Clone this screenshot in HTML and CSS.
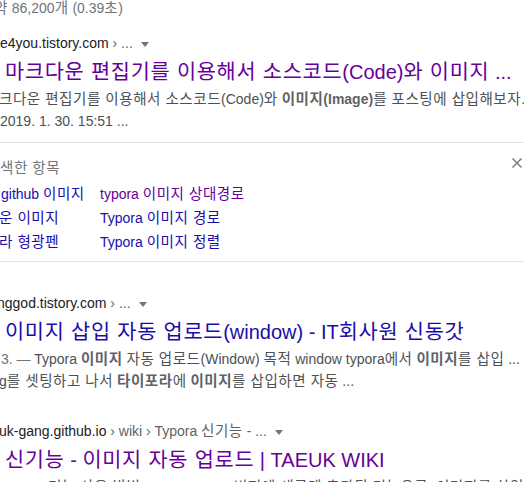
FILE: index.html
```html
<!DOCTYPE html>
<html lang="ko">
<head>
<meta charset="utf-8">
<title>Typora 이미지 - 검색결과</title>
<link rel="stylesheet" href="styles.css">
</head>
<body>
<div class="page">
  <div class="stats"><span class="k">약</span> 86,200<span class="k">개</span> (0.39<span class="k">초</span>)</div>

  <div class="result first">
    <div class="url"><span class="domain">e4you.tistory.com</span><span class="crumb"> › ...</span><span class="arrow"></span></div>
    <div class="title visited"><span class="k">마크다운 편집기를 이용해서 소스코드</span>(Code)<span class="k">와 이미지</span> ...</div>
    <div class="snippet">
      <div class="line s1a"><span class="k">크다운 편집기를 이용해서 소스코드</span>(Code)<span class="k">와</span> <b><span class="k">이미지</span>(Image)</b><span class="k">를 포스팅에 삽입해보자</span>.</div>
      <div class="line">2019. 1. 30. 15:51 ...</div>
    </div>
  </div>

  <div class="related">
    <div class="rel-head">
      <span class="rel-title k">색한 항목</span>
      <svg class="close" width="12" height="12" viewBox="0 0 12 12"><path d="M1.5 1.5 L10.5 10.5 M10.5 1.5 L1.5 10.5" stroke="#70757a" stroke-width="1.4" fill="none"/></svg>
    </div>
    <div class="rel-grid">
      <a class="rel-link c1a">github <span class="k">이미지</span></a>
      <a class="rel-link visited">typora <span class="k">이미지 상대경로</span></a>
      <a class="rel-link c1b"><span class="k">운 이미지</span></a>
      <a class="rel-link">Typora <span class="k">이미지 경로</span></a>
      <a class="rel-link c1b"><span class="k">라 형광펜</span></a>
      <a class="rel-link">Typora <span class="k">이미지 정렬</span></a>
    </div>
  </div>

  <div class="result second">
    <div class="url shift-url2"><span class="domain">nggod.tistory.com</span><span class="crumb"> › ...</span><span class="arrow"></span></div>
    <div class="title"><span class="k">이미지 삽입 자동 업로드</span>(window) - IT<span class="k">회사원 신동갓</span></div>
    <div class="snippet">
      <div class="line s2a"><span class="date">3. — </span>Typora <b class="k">이미지</b> <span class="k">자동 업로드</span>(Window) <span class="k">목적</span> window typora<span class="k">에서</span> <b class="k">이미지</b><span class="k">를 삽입</span> ...</div>
      <div class="line shift">g<span class="k">를 셋팅하고 나서</span> <b class="k">타이포라</b><span class="k">에</span> <b class="k">이미지</b><span class="k">를 삽입하면 자동</span> ...</div>
    </div>
  </div>

  <div class="result third">
    <div class="url shift"><span class="domain">uk-gang.github.io</span><span class="crumb"> › wiki › Typora <span class="k">신기능</span> - ...</span><span class="arrow"></span></div>
    <div class="title visited"><span class="k">신기능</span> - <span class="k">이미지 자동 업로드</span> | TAEUK WIKI</div>
    <div class="snippet">
      <div class="line shift"><span class="date">0. 4. — </span><span class="k">기능 사용 방법</span> Typora 0.9.86 <span class="k">버전에 새롭게 추가된 기능으로</span>, <span class="k">이미지를 삽입하면</span> ...</div>
    </div>
  </div>
</div>
</body>
</html>
```

FILE: styles.css
```css
html, body {
  margin: 0;
  padding: 0;
  background: #ffffff;
}

body {
  width: 524px;
  height: 482px;
  overflow: hidden;
  font-family: "Liberation Sans", "Noto Sans CJK KR", sans-serif;
  font-size: 14px;
  color: #4d5156;
}

.k {
  font-size: 1.04em;
  letter-spacing: 0.035em;
}

.page {
  display: flex;
  flex-direction: column;
}

.stats {
  line-height: 16px;
  height: 16px;
  color: #70757a;
  white-space: nowrap;
  text-indent: -6px;
}

.result.first { margin-top: 16px; }
.result.second { margin-top: 30px; }
.result.third { margin-top: 28px; }

.url {
  line-height: 22px;
  height: 22px;
  white-space: nowrap;
}

.shift { text-indent: -1px; }
.shift-url2 { text-indent: -3px; }

.domain { color: #202124; }
.crumb { color: #5f6368; }

.arrow {
  display: inline-block;
  width: 0;
  height: 0;
  margin-left: 8px;
  border-top: 5px solid #70757a;
  border-left: 4px solid transparent;
  border-right: 4px solid transparent;
  vertical-align: 1px;
}

.title {
  margin-top: 5px;
  padding-left: 5px;
  font-size: 20px;
  line-height: 26px;
  height: 26px;
  white-space: nowrap;
  color: #1a0dab;
}

.title.visited { color: #660099; }

.snippet {
  margin-top: 3px;
}

.line {
  line-height: 22px;
  height: 22px;
  white-space: nowrap;
}

.s1a { text-indent: -1px; }
.s2a { text-indent: 1px; }

.line b {
  font-weight: bold;
  color: #5f6368;
}

.date { color: #70757a; }

.related {
  margin-top: 10px;
  border-top: 1px solid #dfe1e5;
  border-bottom: 1px solid #dfe1e5;
  padding-bottom: 7px;
}

.rel-head {
  margin-top: 13px;
  height: 24px;
  display: flex;
  justify-content: space-between;
  align-items: flex-start;
}

.rel-title {
  line-height: 24px;
  color: #70757a;
  white-space: nowrap;
}

.close {
  margin-top: 1px;
  margin-right: 1px;
}

.rel-grid {
  margin-top: 2px;
  display: grid;
  grid-template-columns: 100px auto;
}

.rel-link {
  line-height: 24px;
  height: 24px;
  white-space: nowrap;
  color: #1a0dab;
}

.rel-link.visited { color: #660099; }
.c1a { text-indent: 1px; }
.c1b { text-indent: -1px; }
```
